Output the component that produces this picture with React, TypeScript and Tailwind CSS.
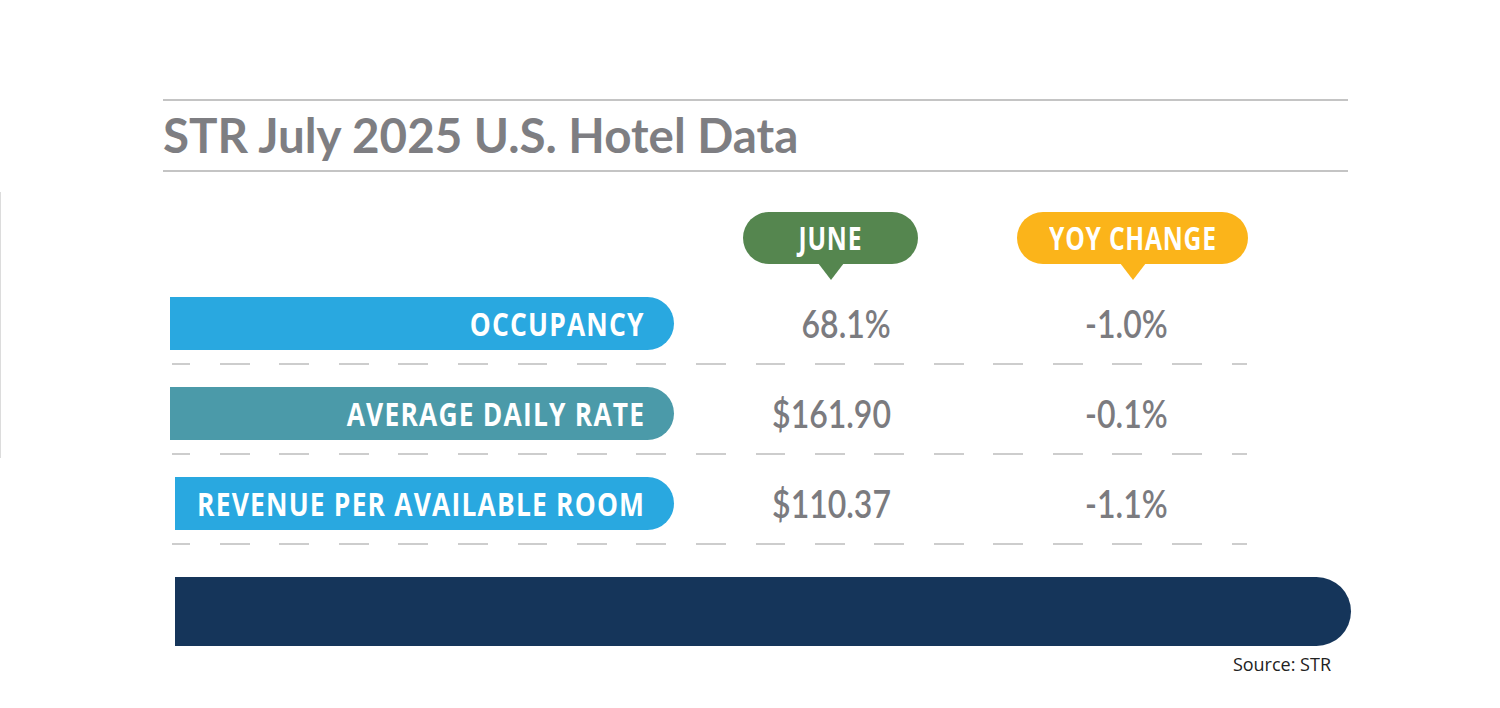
import React from 'react'

const rows = [
  { label: 'OCCUPANCY', bar: 'bg-[#29a8e0] w-[504px]', june: '68.1%', yoy: '-1.0%' },
  { label: 'AVERAGE DAILY RATE', bar: 'bg-[#4b9aa9] w-[504px]', june: '$161.90', yoy: '-0.1%' },
  { label: 'REVENUE PER AVAILABLE ROOM', bar: 'bg-[#29a8e0] w-[499px] ml-[5px]', june: '$110.37', yoy: '-1.1%' },
]

const narrow = "font-['Open_Sans',sans-serif] font-bold text-white whitespace-nowrap"
const dashes =
  'bg-[repeating-linear-gradient(90deg,#cdcdcd_0_18.5px,transparent_18.5px_48px,#cdcdcd_48px_59.5px)]'

function Badge({ text, color, fill, width }: { text: string; color: string; fill: string; width: string }) {
  return (
    <div className={`flex flex-col items-center ${width}`}>
      <div className={`${color} ${narrow} h-[52px] w-full rounded-full flex items-center justify-center text-[32px] tracking-[1px]`}>
        <span className="inline-block scale-x-[0.77]">{text}</span>
      </div>
      <svg width="26" height="17" viewBox="0 0 26 17" className="-mt-px">
        <polygon points="0,0 26,0 13,17" className={fill} />
      </svg>
    </div>
  )
}

function Value({ text, width }: { text: string; width: string }) {
  return (
    <div className={`${width} flex justify-end text-[39px] font-semibold text-[#7b7b7f] leading-none`}>
      <span className="inline-block origin-right scale-x-[0.82] whitespace-nowrap translate-x-[2px]">{text}</span>
    </div>
  )
}

export default function App() {
  return (
    <div className="w-[1500px] h-[708px] bg-white flex font-['Lato',sans-serif] overflow-hidden">
      <div className="w-px h-[266px] mt-[192px] bg-[#dcdcdc] shrink-0" />

      <div className="flex flex-col">
        {/* title */}
        <div className="ml-[162px] mt-[99px] w-[1185px] h-[73px] border-y-2 border-[#c4c4c4] flex items-center">
          <h1 className="text-[47.5px] font-bold text-[#7e7e82] leading-none mt-[-1px]">
            STR July 2025 U.S. Hotel Data
          </h1>
        </div>

        <div className="ml-[169px] flex flex-col">
          {/* headers */}
          <div className="flex mt-[40px] h-[68px]">
            <div className="ml-[573px]">
              <Badge text="JUNE" color="bg-[#55864f]" fill="fill-[#55864f]" width="w-[175px]" />
            </div>
            <div className="ml-[99px]">
              <Badge text="YOY CHANGE" color="bg-[#fbb41a]" fill="fill-[#fbb41a]" width="w-[231px]" />
            </div>
          </div>

          {/* rows */}
          <div className="flex flex-col mt-[17px]">
            {rows.map((r, i) => (
              <div key={r.label} className={i > 0 ? 'mt-[22px]' : ''}>
                <div className="flex items-center h-[53px]">
                  <div className={`${r.bar} h-[53px] rounded-r-[27px] flex items-center justify-end pr-[29px] ${narrow} text-[33px] tracking-[1.5px]`}>
                    <span className="inline-block origin-right scale-x-[0.8]">{r.label}</span>
                  </div>
                  <Value text={r.june} width="w-[215px]" />
                  <Value text={r.yoy} width="w-[277px]" />
                </div>
                <div className={`mt-[13px] ml-[2px] w-[1075px] h-[2px] ${dashes}`} />
              </div>
            ))}
          </div>

          {/* navy bar */}
          <div className="ml-[5px] mt-[32px] w-[1176px] h-[69px] bg-[#15355a] rounded-r-[35px]" />
          <div className="w-[1161px] mt-[9px] text-right text-[18px] text-[#222] font-['Open_Sans',sans-serif] leading-none">
            Source: STR
          </div>
        </div>
      </div>
    </div>
  )
}
